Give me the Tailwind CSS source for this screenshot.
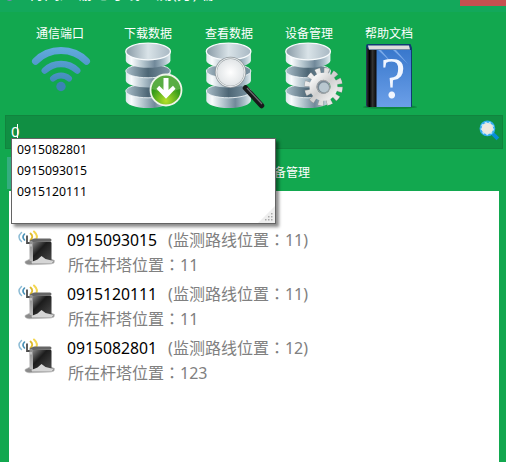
<!DOCTYPE html>
<html lang="zh-CN">
<head>
<meta charset="utf-8">
<title>监测</title>
<script src="https://cdn.jsdelivr.net/npm/@tailwindcss/browser@4"></script>
</head>
<body class="w-[506px] h-[462px] overflow-hidden bg-[#12a84f] font-['Noto_Sans','Noto_Sans_CJK_SC',sans-serif]">
<svg class="absolute w-0 h-0" aria-hidden="true">
  <defs>
    <linearGradient id="side"><stop offset="0" stop-color="#dce6ea"/><stop offset=".13" stop-color="#f8fbfc"/><stop offset=".4" stop-color="#b0c2cb"/><stop offset=".65" stop-color="#71899a"/><stop offset=".85" stop-color="#a9bdc8"/><stop offset="1" stop-color="#e3edf1"/></linearGradient>
    <linearGradient id="top"><stop offset="0" stop-color="#8799a5"/><stop offset=".5" stop-color="#d9e3e8"/><stop offset="1" stop-color="#a8b8c3"/></linearGradient>
    <linearGradient id="inner"><stop offset="0" stop-color="#a9bdc8"/><stop offset=".5" stop-color="#4d6675"/><stop offset="1" stop-color="#7f98a6"/></linearGradient>
    <linearGradient id="wifi" gradientUnits="userSpaceOnUse" x1="0" y1="46" x2="0" y2="92"><stop offset="0" stop-color="#64acdf"/><stop offset="1" stop-color="#3880b1"/></linearGradient>
    <radialGradient id="green" cy=".85"><stop offset="0" stop-color="#b5e029"/><stop offset="1" stop-color="#359b1a"/></radialGradient>
    <radialGradient id="glass"><stop offset="0" stop-color="#fff"/><stop offset="1" stop-color="#dfe3e5"/></radialGradient>
    <linearGradient id="gear" x2="1" y2="1"><stop offset="0" stop-color="#fafafa"/><stop offset=".5" stop-color="#cfcfcf"/><stop offset="1" stop-color="#f0f0f0"/></linearGradient>
    <linearGradient id="book" x2="0" y2="1"><stop offset="0" stop-color="#3978cc"/><stop offset="1" stop-color="#6b9fe8"/></linearGradient>
    <linearGradient id="spine"><stop offset="0" stop-color="#333"/><stop offset=".3" stop-color="#000"/><stop offset=".6" stop-color="#333"/><stop offset="1" stop-color="#080808"/></linearGradient>
    <linearGradient id="case" x2="1" y2="1"><stop offset="0" stop-color="#8a8a8a"/><stop offset=".4" stop-color="#1c1c1c"/><stop offset="1" stop-color="#4a4a4a"/></linearGradient>
    <linearGradient id="left" x2="0" y2="1"><stop offset="0" stop-color="#8c8c8c"/><stop offset="1" stop-color="#bdbdbd"/></linearGradient>
    <symbol id="db" viewBox="0 0 46 66" overflow="visible">
      <path d="M.8 48v10c0 4 10 7.6 22.4 7.6S45.400 62 45.400 58V48z" fill="url(#side)"/>
      <ellipse cx="23.100" cy="48.500" rx="22.300" ry="6.800" fill="url(#inner)" stroke="#edf3f5" stroke-width=".9"/>
      <path d="M.8 28v10c0 4 10 7 22.400 7s22.200-3 22.200-7V28z" fill="url(#side)"/>
      <ellipse cx="23.100" cy="28.500" rx="22.300" ry="6.800" fill="url(#inner)" stroke="#edf3f5" stroke-width=".9"/>
      <path d="M.8 9v9c0 4 10 7.300 22.400 7.300S45.400 22 45.400 18V9z" fill="url(#side)"/>
      <ellipse cx="23.100" cy="9" rx="22.300" ry="8.300" fill="url(#top)" stroke="#f8fbfc" stroke-width="1.300"/>
    </symbol>
    <symbol id="server" viewBox="0 0 40 40">
      <g fill="none" stroke-linecap="round">
        <path d="M4.500 3.500q-5 4.500 0 9" stroke="#8dbcd5" stroke-width="1.500"/>
        <path d="M7.500 5q-3 3 0 6" stroke="#4790b7" stroke-width="1.600"/>
        <path d="M17 2.500q5 4.500 1.500 9" stroke="#f3d650" stroke-width="2"/>
        <path d="M13.500 4.500q3.500 3 0 6.500" stroke="#dfbb2c" stroke-width="1.800"/>
        <path d="M10 6.500v7.500h3" stroke="#4d4d4d" stroke-width="1.800" stroke-linecap="butt"/>
      </g>
      <path d="M8 32.500l5-2.500 21 0 3.500 1.500-.5 2.500-3 1-22 .8q-4.500-.6-4-3.300z" fill="#8b8b8b" stroke="#bbb" stroke-width=".6"/>
      <path d="M15.500 12.500H33q1.500 0 1.500 1.500v17.500l-18.500 1z" fill="url(#case)"/>
      <path d="M12.500 11.500l3.500 1.500v20l-3.500-1.500z" fill="url(#left)"/>
      <path d="M12.500 11.500l4.500-2h16q1.500 0 1.500 1.500l-.5 1.500-18 .5z" fill="#666"/>
      <path d="M14.500 33l6-2.500 4-3.500 4 3 8 2-2 2.500H15z" fill="#d6d6d6"/>
      <path d="M14 15v2.500" stroke="#eee"/>
    </symbol>
  </defs>
</svg>

<header class="flex h-[12px] justify-between overflow-hidden bg-[#13a85b]">
  <div class="flex h-[5px] overflow-hidden">
    <span class="ml-[5px] -mt-[8px] size-[9px] rounded-full border border-[#8aa0c0] bg-[#35257c]"></span>
    <h1 class="ml-[14px] -mt-[15px] h-[18px] whitespace-nowrap text-[16px] leading-[17px] text-white">特高压输电导线监测(分)端</h1>
  </div>
  <div class="h-[6px] w-[46px] bg-[#c75050]"></div>
</header>

<nav class="flex h-[103px] pl-5 pt-[13px] text-[12px] leading-[17px] text-white">
  <div class="mr-2 flex w-20 flex-col items-center">
    <span>通信端口</span>
    <svg class="h-[70px] w-20" viewBox="20 42 80 70" fill="none" stroke="url(#wifi)" stroke-linecap="round">
      <path d="M35.500 61.200A36 36 0 0 1 86.500 61.200" stroke-width="7"/>
      <path d="M44.800 70.500A23.500 23.500 0 0 1 77.200 70.500" stroke-width="6.500"/>
      <path d="M53 78.500A12.500 12.500 0 0 1 69 78.500" stroke-width="6"/>
      <circle cx="61" cy="86.500" r="4.700" fill="#3b83b5" stroke="none"/>
    </svg>
  </div>
  <div class="flex w-20 flex-col items-center">
    <span>下载数据</span>
    <svg class="h-[70px] w-20" viewBox="108 42 80 70">
      <use href="#db" x="125" y="42.500" width="46" height="66"/>
      <circle cx="166" cy="90" r="15.500" fill="url(#green)" stroke="#eef5e9" stroke-width="1.800"/>
      <path d="M152 89a14 14 0 0 1 28 0q-14 6-28 0z" fill="#fff" opacity=".18"/>
      <path d="M163.500 78h5v12l4.500-4.300 2.500 3-9.500 10-9.500-10 2.700-3 4.300 4.300z" fill="#fff"/>
    </svg>
  </div>
  <div class="ml-px flex w-20 flex-col items-center">
    <span>查看数据</span>
    <svg class="h-[70px] w-20" viewBox="189 42 80 70">
      <use href="#db" x="205.500" y="42.500" width="46" height="66"/>
      <path d="M245.500 88l16 17.500" stroke="#17191a" stroke-width="5.500" stroke-linecap="round"/>
      <path d="M247 88l15 16" stroke="#6a6e70" stroke-width="1.200"/>
      <circle cx="230.500" cy="72.300" r="14.500" fill="url(#glass)" stroke="#8b9498" stroke-width="2.200"/>
      <circle cx="230.500" cy="72.300" r="14.300" fill="none" stroke="#e6e9ea" stroke-width="1.200"/>
    </svg>
  </div>
  <div class="flex w-20 flex-col items-center">
    <span>设备管理</span>
    <svg class="h-[70px] w-20" viewBox="269 42 80 70">
      <use href="#db" x="285" y="42.500" width="46" height="66"/>
      <g fill="none" stroke="#999"><circle cx="323.500" cy="86.800" r="15.500" stroke-width="7.400" stroke-dasharray="4.900 3.216"/></g>
      <g fill="none" stroke="url(#gear)"><circle cx="323.500" cy="86.800" r="15.700" stroke-width="6.400" stroke-dasharray="4.200 4.020" stroke-dashoffset="-.35"/><circle cx="323.500" cy="86.800" r="10.500" stroke-width="7"/></g>
      <circle cx="323.500" cy="86.800" r="6.500" fill="#788894" stroke="#a7a7a7"/>
      <circle cx="324" cy="87.500" r="5" fill="#b8c7cf"/>
    </svg>
  </div>
  <div class="flex w-20 flex-col items-center">
    <span>帮助文档</span>
    <svg class="h-[70px] w-20" viewBox="349 42 80 70">
      <ellipse cx="390" cy="107" rx="27" ry="2" fill="#08682e" opacity=".5"/>
      <path d="M366 46q0-2 2-2h42.500l1.500 4v58q0 1-1 1h-43q-2 0-2-2z" fill="#123a73"/>
      <path d="M368 45.500h41l1 4h-41z" fill="#ddd"/>
      <path d="M376 50h35v57h-35z" fill="url(#book)"/>
      <path d="M378 50l14 13-11-13zM393 50l15 14-12-14z" fill="#acd0ff" opacity=".55"/>
      <path d="M366.500 47l2.500 3h7.500v57H369q-2.500 0-2.500-2z" fill="url(#spine)"/>
      <text x="393" y="98" text-anchor="middle" font-family="Liberation Serif, serif" font-size="59" textLength="25" lengthAdjust="spacingAndGlyphs" fill="#f1f6ff">?</text>
    </svg>
  </div>
</nav>

<div class="relative ml-[5px] flex h-[34px] w-[498px] items-center justify-between border border-[#11843e] bg-[#108f43] pl-[5px] pr-[2px] text-white">
  <div class="-mt-[2px] flex items-center"><span class="inline-block w-[7px] text-[15px] leading-none">0</span><span class="-ml-px h-[15px] w-px bg-white"></span></div>
  <svg class="-mt-[3px] size-[21px]" viewBox="0 0 20 20">
    <path d="M12.500 12.500l5.500 5.500" stroke="#078dd7" stroke-width="3.600"/>
    <circle cx="8" cy="8" r="6.500" fill="#eee8df" stroke="#35adf0" stroke-width="2"/>
    <circle cx="8" cy="8" r="5.800" fill="none" stroke="#bce7fa" stroke-width="1.300" stroke-dasharray="2 2"/>
  </svg>
  <ul class="absolute left-[5px] top-[22px] z-10 h-[86px] w-[265px] border border-[#646464] bg-white pl-[5px] text-[12.250px] leading-[21px] text-black shadow-[3px_3px_3px_rgba(0,0,0,0.45)]">
    <li>0915082801</li>
    <li>0915093015</li>
    <li>0915120111</li>
    <li class="absolute bottom-0 right-0" aria-hidden="true">
      <svg class="size-[17px]" viewBox="0 0 17 17"><path d="M17 0v17H0z" fill="#eee"/><path d="M13 7h1.500v1.500H13zM10 10h1.500v1.500H10zM13 10h1.500v1.500H13zM7 13h1.500v1.500H7zM10 13h1.500v1.500H10zM13 13h1.500v1.500H13z" fill="#aaa"/></svg>
    </li>
  </ul>
</div>

<div class="flex h-[42px] items-end pl-[7px] text-[12px] text-white">
  <div class="mb-[2px] h-8 w-[120px] bg-[#35ae80]"></div>
  <div class="ml-[135px] h-[28px] leading-[19px]">设备管理</div>
</div>

<main class="ml-[9px] h-[271px] w-[490px] bg-white pt-[37px] text-[16px] leading-[25px] text-[#808080]">
  <div class="flex h-[54px] pl-[8px]">
    <svg class="mt-px size-[40px]"><use href="#server"/></svg>
    <div class="ml-[10px]">
      <p class="h-[25px] whitespace-nowrap"><span class="mr-[11px] text-[15.750px] text-black">0915093015</span>(监测路线位置<span class="font-['Noto_Sans_CJK_TC'] leading-none" lang="zh-TW">：</span>11)</p>
      <p class="pl-px">所在杆塔位置<span class="font-['Noto_Sans_CJK_TC'] leading-none" lang="zh-TW">：</span>11</p>
    </div>
  </div>
  <div class="flex h-[54px] pl-[8px]">
    <svg class="mt-px size-[40px]"><use href="#server"/></svg>
    <div class="ml-[10px]">
      <p class="h-[25px] whitespace-nowrap"><span class="mr-[11px] text-[15.750px] text-black">0915120111</span>(监测路线位置<span class="font-['Noto_Sans_CJK_TC'] leading-none" lang="zh-TW">：</span>11)</p>
      <p class="pl-px">所在杆塔位置<span class="font-['Noto_Sans_CJK_TC'] leading-none" lang="zh-TW">：</span>11</p>
    </div>
  </div>
  <div class="flex h-[54px] pl-[8px]">
    <svg class="mt-px size-[40px]"><use href="#server"/></svg>
    <div class="ml-[10px]">
      <p class="h-[25px] whitespace-nowrap"><span class="mr-[11px] text-[15.750px] text-black">0915082801</span>(监测路线位置<span class="font-['Noto_Sans_CJK_TC'] leading-none" lang="zh-TW">：</span>12)</p>
      <p class="pl-px">所在杆塔位置<span class="font-['Noto_Sans_CJK_TC'] leading-none" lang="zh-TW">：</span>123</p>
    </div>
  </div>
</main>
</body>
</html>
